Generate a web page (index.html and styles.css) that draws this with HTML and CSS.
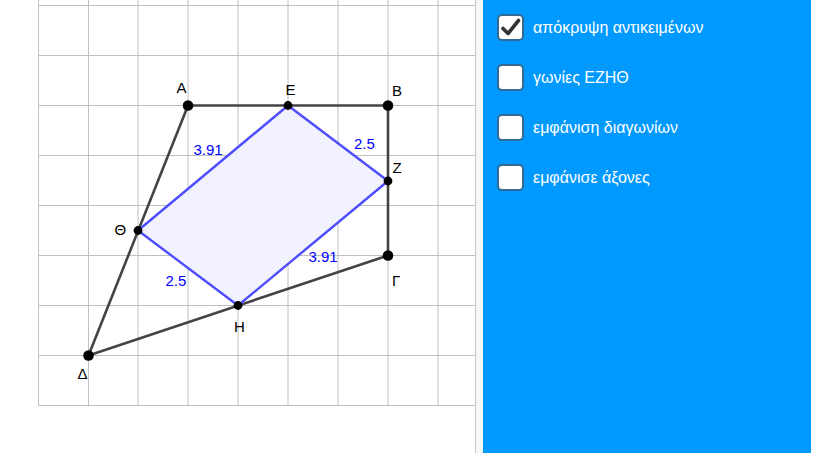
FILE: index.html
```html
<!DOCTYPE html>
<html lang="el">
<head>
<meta charset="utf-8">
<title>ΕΖΗΘ</title>
<link rel="stylesheet" href="styles.css">
</head>
<body>
<div class="app">
  <div class="graphics">
    <svg class="canvas" width="475" height="453" viewBox="0 0 475 453">
      <g class="grid">
        <line x1="38.5" y1="0" x2="38.5" y2="405.5"/>
        <line x1="88.5" y1="0" x2="88.5" y2="405.5"/>
        <line x1="138" y1="0" x2="138" y2="405.5"/>
        <line x1="188" y1="0" x2="188" y2="405.5"/>
        <line x1="238" y1="0" x2="238" y2="405.5"/>
        <line x1="288" y1="0" x2="288" y2="405.5"/>
        <line x1="338" y1="0" x2="338" y2="405.5"/>
        <line x1="388" y1="0" x2="388" y2="405.5"/>
        <line x1="438" y1="0" x2="438" y2="405.5"/>
        <line x1="38" y1="5.5" x2="475" y2="5.5"/>
        <line x1="38" y1="55.5" x2="475" y2="55.5"/>
        <line x1="38" y1="105.5" x2="475" y2="105.5"/>
        <line x1="38" y1="155.5" x2="475" y2="155.5"/>
        <line x1="38" y1="205.5" x2="475" y2="205.5"/>
        <line x1="38" y1="255.5" x2="475" y2="255.5"/>
        <line x1="38" y1="305.5" x2="475" y2="305.5"/>
        <line x1="38" y1="355.5" x2="475" y2="355.5"/>
        <line x1="38" y1="405.5" x2="475" y2="405.5"/>
      </g>
      <polygon class="fill" points="288,105.5 388,181 238,305.5 138,230.5"/>
      <g class="seg">
        <line x1="188" y1="105.5" x2="388" y2="105.5"/>
        <line x1="388" y1="105.5" x2="388" y2="255.5"/>
        <line x1="388" y1="255.5" x2="88.5" y2="355.5"/>
        <line x1="88.5" y1="355.5" x2="188" y2="105.5"/>
      </g>
      <g class="edge">
        <line x1="288" y1="105.5" x2="388" y2="181"/>
        <line x1="388" y1="181" x2="238" y2="305.5"/>
        <line x1="238" y1="305.5" x2="138" y2="230.5"/>
        <line x1="138" y1="230.5" x2="288" y2="105.5"/>
      </g>
      <g class="pt">
        <circle cx="188" cy="105.5" r="5.3"/>
        <circle cx="388" cy="105.5" r="5.3"/>
        <circle cx="388" cy="255.5" r="5.3"/>
        <circle cx="88.5" cy="355.5" r="5.3"/>
        <circle cx="288" cy="105.5" r="4.4"/>
        <circle cx="388" cy="181" r="4.4"/>
        <circle cx="238" cy="305.5" r="4.4"/>
        <circle cx="138" cy="230.5" r="4.4"/>
      </g>
      <g class="lbl">
        <text x="176.5" y="93">Α</text>
        <text x="285.5" y="95">Ε</text>
        <text x="392" y="95.5">Β</text>
        <text x="392.5" y="172.5">Ζ</text>
        <text x="114.5" y="235">Θ</text>
        <text x="392" y="285.5">Γ</text>
        <text x="234" y="331.5">Η</text>
        <text x="77.5" y="378.5">Δ</text>
      </g>
      <g class="val">
        <text x="193.5" y="155">3.91</text>
        <text x="354" y="149">2.5</text>
        <text x="308.5" y="261.5">3.91</text>
        <text x="165.5" y="286">2.5</text>
      </g>
    </svg>
  </div>
  <div class="strip"></div>
  <div class="panel">
    <label class="row">
      <span class="box checked">
        <svg width="23" height="23" viewBox="0 0 23 23"><path d="M4 12.5 L9 17.5 L19.5 4.5" class="tick"/></svg>
      </span>
      <span class="txt">απόκρυψη αντικειμένων</span>
    </label>
    <label class="row">
      <span class="box"></span>
      <span class="txt">γωνίες ΕΖΗΘ</span>
    </label>
    <label class="row">
      <span class="box"></span>
      <span class="txt">εμφάνιση διαγωνίων</span>
    </label>
    <label class="row">
      <span class="box"></span>
      <span class="txt">εμφάνισε άξονες</span>
    </label>
  </div>
</div>
</body>
</html>
```

FILE: styles.css
```css
html, body {
  margin: 0;
  padding: 0;
  background: #ffffff;
}
body {
  width: 813px;
  height: 455px;
  overflow: hidden;
  font-family: "Liberation Sans", Arial, sans-serif;
}
.app {
  display: flex;
  height: 453px;
}
.graphics {
  width: 475px;
  height: 453px;
  border-right: 1px solid #c8c8c8;
  background: #ffffff;
}
.canvas {
  display: block;
}
.grid line {
  stroke: #c0c0c0;
  stroke-width: 1;
}
.fill {
  fill: #f2f2ff;
  stroke: none;
}
.seg line {
  stroke: #444444;
  stroke-width: 2.6;
}
.edge line {
  stroke: #4d4dff;
  stroke-width: 2.4;
}
.pt circle {
  fill: #000000;
}
.lbl text {
  font-family: "Liberation Sans", Arial, sans-serif;
  font-size: 15px;
  fill: #000000;
}
.val text {
  font-family: "Liberation Sans", Arial, sans-serif;
  font-size: 15px;
  fill: #0000ff;
}
.strip {
  width: 7px;
  background: #f6f8f8;
}
.panel {
  width: 328px;
  background: #0099ff;
  padding: 14px 0 0 14px;
  box-sizing: border-box;
  display: flex;
  flex-direction: column;
  gap: 23px;
}
.row {
  display: flex;
  align-items: center;
  gap: 9px;
  height: 27px;
}
.box {
  width: 27px;
  height: 27px;
  box-sizing: border-box;
  border: 2px solid #336a94;
  border-radius: 5px;
  background: #ffffff;
  display: flex;
  align-items: center;
  justify-content: center;
}
.tick {
  fill: none;
  stroke: #333333;
  stroke-width: 3.6;
  stroke-linecap: round;
  stroke-linejoin: round;
}
.txt {
  color: #ffffff;
  font-size: 16px;
  line-height: 27px;
}
```
